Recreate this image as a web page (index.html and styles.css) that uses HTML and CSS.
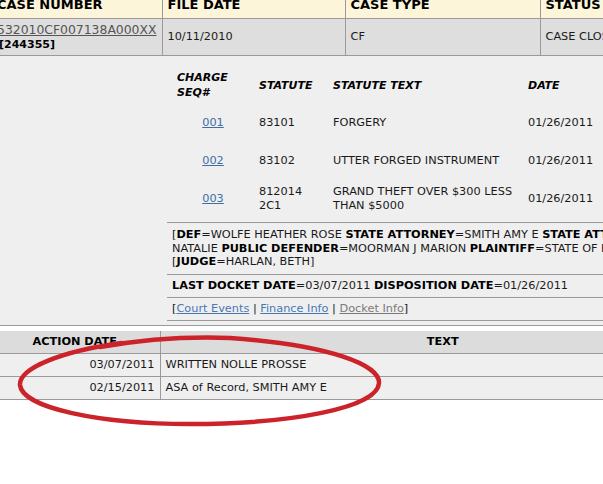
FILE: index.html
```html
<!DOCTYPE html>
<html>
<head>
<meta charset="utf-8">
<link rel="stylesheet" href="styles.css">
</head>
<body>
<div class="page">
  <table class="case">
    <colgroup><col class="c1"><col class="c2"><col class="c3"><col class="c4"></colgroup>
    <thead>
      <tr><th>CASE NUMBER</th><th>FILE DATE</th><th>CASE TYPE</th><th>STATUS</th></tr>
    </thead>
    <tbody>
      <tr>
        <td><a class="casenum" href="#">532010CF007138A000XX</a><br><b>[244355]</b></td>
        <td>10/11/2010</td>
        <td>CF</td>
        <td>CASE CLOSED</td>
      </tr>
    </tbody>
  </table>

  <div class="details">
    <div class="details-inner">
      <table class="charges">
        <colgroup><col class="s1"><col class="s2"><col class="s3"><col class="s4"></colgroup>
        <thead>
          <tr><th>CHARGE<br>SEQ#</th><th>STATUTE</th><th>STATUTE TEXT</th><th>DATE</th></tr>
        </thead>
        <tbody>
          <tr><td class="seq"><a href="#">001</a></td><td>83101</td><td>FORGERY</td><td>01/26/2011</td></tr>
          <tr><td class="seq"><a href="#">002</a></td><td>83102</td><td>UTTER FORGED INSTRUMENT</td><td>01/26/2011</td></tr>
          <tr><td class="seq"><a href="#">003</a></td><td>812014<br>2C1</td><td>GRAND THEFT OVER $300 LESS<br>THAN $5000</td><td>01/26/2011</td></tr>
        </tbody>
      </table>
      <div class="info">[<b>DEF</b>=WOLFE HEATHER ROSE <b>STATE ATTORNEY</b>=SMITH AMY E <b>STATE ATTORNEY</b>=KRAMER<br>NATALIE <b>PUBLIC DEFENDER</b>=MOORMAN J MARION <b>PLAINTIFF</b>=STATE OF FLORIDA]<br>[<b>JUDGE</b>=HARLAN, BETH]</div>
      <div class="info"><b>LAST DOCKET DATE</b>=03/07/2011 <b>DISPOSITION DATE</b>=01/26/2011</div>
      <div class="info links">[<a href="#">Court Events</a> | <a href="#">Finance Info</a> | <a class="visited" href="#">Docket Info</a>]</div>
    </div>
  </div>

  <table class="actions">
    <colgroup><col class="a1"><col class="a2"></colgroup>
    <thead><tr><th>ACTION DATE</th><th>TEXT</th></tr></thead>
    <tbody>
      <tr><td class="date">03/07/2011</td><td>WRITTEN NOLLE PROSSE</td></tr>
      <tr><td class="date">02/15/2011</td><td>ASA of Record, SMITH AMY E</td></tr>
    </tbody>
  </table>
</div>

<svg class="mark" width="603" height="484" viewBox="0 0 603 484" aria-hidden="true">
  <path d="M 122 343 C 62 351, 19 368, 20 385 C 22 408, 100 424, 190 424 C 290 424, 378 408, 379 383 C 380 365, 330 345, 230 338 C 180 336, 140 340, 100 347" fill="none" stroke="#cc2229" stroke-width="4.5" stroke-linecap="round"/>
</svg>
</body>
</html>
```

FILE: styles.css
```css
html, body {
  margin: 0;
  padding: 0;
  background: #ffffff;
  overflow: hidden;
}

body {
  font-family: "DejaVu Sans", Verdana, sans-serif;
  font-size: 11.3px;
  color: #1a1a1a;
  width: 603px;
  height: 484px;
  position: relative;
}

.page {
  width: 603px;
  overflow: hidden;
  margin-top: -8px;
}

table {
  border-collapse: collapse;
  table-layout: fixed;
}

/* ---- case table ---- */
.case {
  margin-left: -8px;
  width: 748px;
}
.case .c1 { width: 170px; }
.case .c2 { width: 183px; }
.case .c3 { width: 195px; }
.case .c4 { width: 200px; }

.case th {
  background: #fdf5d9;
  font-size: 13px;
  font-weight: bold;
  line-height: 14px;
  text-align: left;
  padding: 6px 5px;
  border-bottom: 1px solid #9a9a9a;
  border-right: 1px solid #9a9a9a;
  color: #000;
  white-space: nowrap;
}
.case td {
  background: #dedede;
  line-height: 13.5px;
  padding: 4px 5px 4px 5px;
  border-bottom: 1px solid #9a9a9a;
  border-right: 1px solid #9a9a9a;
  vertical-align: middle;
  white-space: nowrap;
}
.case td:first-child {
  padding-left: 7px;
}
.casenum {
  color: #555;
  font-size: 12.4px;
  margin-left: -2px;
}
.case b { color: #000; font-size: 11px; }

/* ---- details ---- */
.details {
  background: #efefef;
  padding-top: 10px;
  padding-bottom: 4px;
  border-bottom: 1px solid #9a9a9a;
}
.details-inner {
  margin-left: 167px;
  width: 560px;
}
.charges {
  margin-left: 5px;
  width: 451px;
}
.charges .s1 { width: 82px; }
.charges .s2 { width: 74px; }
.charges .s3 { width: 195px; }
.charges .s4 { width: 100px; }

.charges th {
  font-size: 11px;
  font-weight: bold;
  font-style: italic;
  text-align: left;
  line-height: 15px;
  padding: 0 5px;
  height: 38px;
  color: #000;
}
.charges td {
  line-height: 14px;
  padding: 0 5px;
  height: 38px;
  vertical-align: middle;
  white-space: nowrap;
}
.charges td.seq { text-align: center; }
.charges a { color: #3f6ea6; }

.info {
  border-top: 1px solid #9a9a9a;
  padding: 5px 5px 4.5px 5px;
  line-height: 13.7px;
  white-space: nowrap;
}
.charges + .info { margin-top: 4px; }
.info + .info { padding-top: 4px; }
.info b { color: #000; }
.links { border-bottom: 1px solid #9a9a9a; }
.links a { color: #4a78b3; }
.links a.visited { color: #7a7a7a; }

/* ---- actions ---- */
.actions {
  margin-top: 5px;
  margin-left: -10px;
  width: 736px;
}
.actions .a1 { width: 170px; }
.actions th {
  background: #dcdcdc;
  font-weight: bold;
  line-height: 14px;
  padding: 4px 5px;
  border-bottom: 1px solid #9a9a9a;
  border-right: 1px solid #9a9a9a;
  color: #000;
  font-size: 11.3px;
}
.actions td {
  background: #efefef;
  line-height: 14px;
  padding: 4px 5px;
  border-bottom: 1px solid #9a9a9a;
  border-right: 1px solid #9a9a9a;
  white-space: nowrap;
}
.actions td.date { text-align: right; }

/* ---- hand-drawn highlight ---- */
.mark {
  position: absolute;
  left: 0;
  top: 0;
  pointer-events: none;
}
```
